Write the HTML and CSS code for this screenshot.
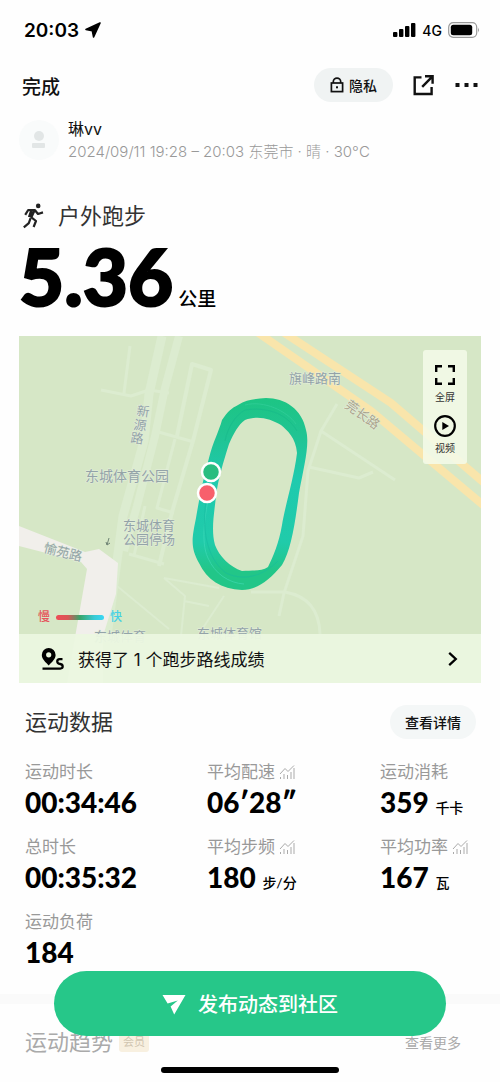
FILE: index.html
```html
<!DOCTYPE html>
<html lang="zh-CN">
<head>
    <meta charset="UTF-8">
    <meta name="viewport" content="width=device-width, initial-scale=1.0">
    <title>户外跑步</title>
    <link rel="stylesheet" href="styles.css">
</head>
<body>
    <div class="status-bar">
        <div class="status-left">
            <span class="clock">20:03</span>
            <svg width="16" height="16" viewBox="0 0 16 16"><path d="M15 1 L1 7.5 L7.3 8.7 L8.6 15 Z" fill="#000" stroke="#000" stroke-width="1.6" stroke-linejoin="round"/></svg>
        </div>
        <div class="status-right">
            <svg width="23" height="14" viewBox="0 0 23 14">
                <rect x="0" y="9" width="4.4" height="5" rx="1"/>
                <rect x="6" y="6" width="4.4" height="8" rx="1"/>
                <rect x="12" y="3" width="4.4" height="11" rx="1"/>
                <rect x="18" y="0" width="4.4" height="14" rx="1"/>
            </svg>
            <span class="network">4G</span>
            <svg width="32" height="16" viewBox="0 0 32 16">
                <rect x="0.7" y="0.7" width="28" height="14.6" rx="4.5" fill="#fff" stroke="#999" stroke-width="1.2"/>
                <rect x="2.8" y="2.8" width="21.4" height="10.4" rx="2.5"/>
                <path d="M30.2 5.5 Q32 8 30.2 10.5 Z" fill="#888"/>
            </svg>
        </div>
    </div>

    <header class="nav">
        <a href="#" class="nav-done">完成</a>
        <button class="pill privacy">
            <svg width="14" height="16" viewBox="0 0 14 16" fill="none" stroke="#111" stroke-width="1.7">
                <rect x="1.4" y="6" width="11.2" height="8.6"/>
                <path d="M3.3 6 V4.8 A3.7 3.7 0 0 1 10.7 4.8 V6"/>
                <rect x="6" y="9.3" width="2" height="2" fill="#111" stroke="none"/>
            </svg>
            隐私
        </button>
        <button class="icon-button" aria-label="分享">
            <svg width="22" height="22" viewBox="0 0 22 22" fill="none" stroke="#111" stroke-width="2.4">
                <path d="M8.5 3.4 H1.7 V20 H18.6 V13"/>
                <path d="M12 2.2 H19.6 V9.8 M19 2.8 L9.2 12.8"/>
            </svg>
        </button>
        <button class="icon-button" aria-label="更多">
            <svg width="24" height="4" viewBox="0 0 24 4"><path d="M0.5 0 h4 v4 h-4z M9.5 0 h4 v4 h-4z M18.5 0 h4 v4 h-4z" fill="#111"/></svg>
        </button>
    </header>

    <main>
        <section class="user">
            <svg class="avatar" width="40" height="40" viewBox="0 0 40 40">
                <circle cx="20" cy="20" r="20" fill="#f9fbfb"/>
                <circle cx="20" cy="16" r="5" fill="#e2e6e6"/>
                <rect x="13" y="23" width="13" height="5" rx="1" fill="#e2e6e6"/>
            </svg>
            <div>
                <div class="user-name">琳vv</div>
                <div class="user-meta">2024/09/11 19:28 – 20:03 东莞市 · 晴 · 30°C</div>
            </div>
        </section>

        <section class="summary">
            <h1>
                <svg width="22" height="26" viewBox="0 0 22 26" fill="none" stroke="#222" stroke-width="2.2" stroke-linejoin="round">
                    <circle cx="15.2" cy="2.9" r="2.3" fill="#222" stroke="none"/>
                    <path d="M2.2 11.8 L5.2 7 L12 7.2 L15 11 L20 9.4"/>
                    <path d="M11.6 7.4 L8.4 14.4 L13 18 L10.6 24"/>
                    <path d="M8.4 7.2 L6 14 M7.6 15.2 L5.8 20.2 L0.8 24.4"/>
                    <path d="M9 8 L7 14" stroke-width="3"/>
                </svg>
                户外跑步
            </h1>
            <p class="distance"><strong>5.36</strong><span>公里</span></p>
        </section>

        <section class="map">
            <svg class="map-canvas" viewBox="0 0 462 347" preserveAspectRatio="xMidYMid slice">
                <defs>
                    <linearGradient id="route" x1="0" y1="0" x2="0" y2="1">
                        <stop offset="0" stop-color="#1dc584"/>
                        <stop offset="0.2" stop-color="#20c493"/>
                        <stop offset="0.42" stop-color="#1fcaae"/>
                        <stop offset="0.75" stop-color="#20cbaa"/>
                        <stop offset="0.9" stop-color="#22c688"/>
                        <stop offset="1" stop-color="#22c688"/>
                    </linearGradient>
                    <linearGradient id="speed">
                        <stop offset="0" stop-color="#ee4d58"/>
                        <stop offset="0.25" stop-color="#d95656"/>
                        <stop offset="0.5" stop-color="#37a56b"/>
                        <stop offset="0.8" stop-color="#39cbd6"/>
                        <stop offset="1" stop-color="#3ad7f5"/>
                    </linearGradient>
                </defs>
                <rect width="462" height="347" fill="#d6e7c6"/>

                <!-- 小路 -->
                <g fill="none" stroke="#dcecd0" stroke-linejoin="round">
                    <path stroke-width="9" d="M143 0 L130 58 L125 105 L104 180 L88 300"/>
                    <path stroke-width="8" d="M160 0 L146 52 L136 100 L118 170 L105 215"/>
                    <path stroke-width="3" d="M111 10 L105 57 M82 54 L112 60 L130 54 L150 57"/>
                    <path stroke-width="4" d="M158 100 L173 28 L192 34 L174 105 L153 176 L140 230"/>
                    <path stroke-width="3" d="M136 95 L175 106 M156 103 L138 172 L155 177 M110 218 L145 228 M126 170 L115 220"/>
                    <path stroke-width="2" d="M98 250 L150 293 M145 242 L200 252 M145 242 L166 260 L162 300 M205 260 L180 298 M165 265 L190 270"/>
                    <path stroke-width="3" d="M318 68 L302 95 L289 135 L284 200 L265 257 L260 280 M302 95 L376 144 M290 131 L340 142 L354 136"/>
                    <path stroke-width="3" d="M232 256 H266 Q300 262 301 298"/>
                </g>

                <!-- 主路 -->
                <path d="M0 190 L66 216 L80 213 L99 227 L97 258 L84 300 V347 H48 L68 233 L62 226 L0 210 Z" fill="#f1efeb"/>
                <path d="M238 -4 L352 75 L470 174 M264 -4 L372 67 L470 151" stroke="#f9e5ab" stroke-width="8" fill="none"/>

                <!-- 跑步轨迹 -->
                <path d="M247 62 C266 62 283 73 287 94 C291 108 285 130 280 157 C276 188 272 214 263 229 C250 245 237 254 223 254 C202 253 188 244 180 227 C171 211 173 202 177 182 C180 164 184 143 190 122 C194 106 200 95 203 84 C209 75 213 72 219 69 C228 63 237 63 247 62 Z M226 84 C239 79 252 83 262 89 C268 94 277 102 278 117 C275 142 266 170 263 189 C260 207 254 221 249 231 C242 236 232 234 223 235 C211 231 200 220 196 209 C192 194 195 179 197 160 C199 144 204 127 210 108 C215 97 219 89 226 84 Z" fill="url(#route)" fill-rule="evenodd"/>
                <g fill="none" stroke-width="1" opacity="0.5">
                    <path stroke="#49dfc0" d="M193 145 C186 177 181 205 189 222 C196 238 210 247 225 248"/>
                    <path stroke="#16b78a" d="M206 105 C209 90 217 79 226 74 C246 71 267 76 278 95"/>
                    <path stroke="#16b99f" d="M188 160 C182 191 187 222 207 237 C228 247 247 237 259 225"/>
                    <path stroke="#3bd3a2" d="M226 69 C245 64 268 75 277 88"/>
                </g>
                <circle cx="192" cy="136" r="9" fill="#29bd80" stroke="#fff" stroke-width="2.5"/>
                <circle cx="188" cy="157" r="9" fill="#f8606c" stroke="#fff" stroke-width="2.5"/>

                <!-- 地名 -->
                <g class="map-label">
                    <text x="66" y="145" class="park">东城体育公园</text>
                    <text x="104" y="194">东城体育</text>
                    <text x="104" y="208">公园停场</text>
                    <text x="270" y="47">旗峰路南</text>
                    <text x="117" y="79" transform="rotate(8 117 79)">新</text>
                    <text x="114" y="93" transform="rotate(8 114 93)">源</text>
                    <text x="111" y="106" transform="rotate(8 111 106)">路</text>
                    <text x="24" y="216" transform="rotate(14 24 216)">愉苑路</text>
                    <text x="325" y="71" transform="rotate(36 325 71)" class="on-road">莞长路</text>
                    <text x="75" y="305">东城体育</text>
                    <text x="178" y="302">东城体育馆</text>
                </g>
                <path d="M90 202 L88 209 M87 206 L88 209 L91 207" stroke="#6f8474" fill="none"/>
                <text x="19" y="285" class="legend" fill="#e5545b">慢</text>
                <rect x="37" y="279" width="48" height="5" rx="2.5" fill="url(#speed)"/>
                <text x="91" y="285" class="legend" fill="#45d1e5">快</text>
            </svg>

            <div class="map-tools">
                <button>
                    <svg width="22" height="22" viewBox="0 0 22 22" fill="none" stroke="#000" stroke-width="2.4"><path d="M2.2 8 V2.2 H8 M14 2.2 H19.8 V8 M19.8 14 V19.8 H14 M8 19.8 H2.2 V14"/></svg>
                    全屏
                </button>
                <button>
                    <svg width="22" height="22" viewBox="0 0 22 22"><circle cx="11" cy="11" r="9.8" fill="none" stroke="#000" stroke-width="2.2"/><path d="M8.3 7 L15 11 L8.3 15 Z"/></svg>
                    视频
                </button>
            </div>

            <a href="#" class="route-result">
                <svg width="23" height="24" viewBox="0 0 23 24">
                    <path d="M7.7 1 A7 7 0 0 1 14.6 8 C14.6 12 10.6 15.5 7.7 18.4 C4.8 15.5 0.8 12 0.8 8 A7 7 0 0 1 7.7 1 Z M7.7 5.2 A2.6 2.6 0 1 0 7.7 10.4 A2.6 2.6 0 1 0 7.7 5.2 Z" fill-rule="evenodd"/>
                    <path d="M1.5 21.6 H19.2 C22.6 21.4 22.4 17.4 19.2 17 C15.3 16.6 15.5 12.2 18.5 12.2 H21.5" fill="none" stroke="#000" stroke-width="2.3"/>
                </svg>
                <span>获得了 1 个跑步路线成绩</span>
                <svg width="10" height="16" viewBox="0 0 10 16" fill="none" stroke="#000" stroke-width="2.3"><path d="M1.2 1.8 L7.8 8 L1.2 14.2"/></svg>
            </a>
        </section>

        <section class="data">
            <div class="section-head">
                <h2>运动数据</h2>
                <button class="pill">查看详情</button>
            </div>
            <dl class="stats">
                <div>
                    <dt>运动时长</dt>
                    <dd>00:34:46</dd>
                </div>
                <div>
                    <dt>平均配速 <svg class="trend-icon" viewBox="0 0 16 16"><path d="M1 10 L6 4.5 L9 7.5 L15 1.5 M1.5 15 V13 M5 15 V10 M8.5 15 V11 M12 15 V8 M15 15 V4"/></svg></dt>
                    <dd>06′28″</dd>
                </div>
                <div>
                    <dt>运动消耗</dt>
                    <dd>359 <small>千卡</small></dd>
                </div>
                <div>
                    <dt>总时长</dt>
                    <dd>00:35:32</dd>
                </div>
                <div>
                    <dt>平均步频 <svg class="trend-icon" viewBox="0 0 16 16"><path d="M1 10 L6 4.5 L9 7.5 L15 1.5 M1.5 15 V13 M5 15 V10 M8.5 15 V11 M12 15 V8 M15 15 V4"/></svg></dt>
                    <dd>180 <small>步/分</small></dd>
                </div>
                <div>
                    <dt>平均功率 <svg class="trend-icon" viewBox="0 0 16 16"><path d="M1 10 L6 4.5 L9 7.5 L15 1.5 M1.5 15 V13 M5 15 V10 M8.5 15 V11 M12 15 V8 M15 15 V4"/></svg></dt>
                    <dd>167 <small>瓦</small></dd>
                </div>
                <div>
                    <dt>运动负荷</dt>
                    <dd>184</dd>
                </div>
            </dl>
        </section>

        <section class="trend">
            <h2>运动趋势</h2>
            <span class="vip">会员</span>
            <a href="#">查看更多</a>
        </section>
    </main>

    <footer class="publish-bar">
        <button class="publish">
            <svg width="24" height="22" viewBox="0 0 24 22"><path d="M0.5 2 H23.5 L12.2 21.5 L8.6 13.4 L15.8 7.4 L5.6 10.6 Z" fill="#fff"/></svg>
            发布动态到社区
        </button>
        <div class="home-indicator"></div>
    </footer>
</body>
</html>
```
FILE: styles.css
```css
* {
    box-sizing: border-box;
}

body {
    margin: 0;
    background-color: #fefefe;
    color: #111;
    font-family: Inter, "Noto Sans CJK SC", sans-serif;
}

h1, h2, p, dl, dd {
    margin: 0;
    font-weight: 400;
}

svg {
    display: block;
    flex: none;
}

button {
    padding: 0;
    border: none;
    background: none;
    color: inherit;
    font-family: inherit;
    cursor: pointer;
}

a {
    color: inherit;
    text-decoration: none;
}

.status-bar {
    display: flex;
    justify-content: space-between;
    align-items: center;
    height: 60px;
    padding: 0 20px 0 24px;
}

.status-left, .status-right {
    display: flex;
    align-items: center;
    gap: 6px;
    color: #000;
}

.clock {
    font-size: 19px;
    font-weight: 600;
}

.network {
    font-size: 14px;
    font-weight: 500;
}

.nav {
    display: flex;
    align-items: center;
    height: 50px;
    padding: 0 21px 0 22px;
    gap: 20px;
}

.nav-done {
    margin-right: auto;
    font-size: 19px;
    font-weight: 500;
}

.pill {
    display: flex;
    align-items: center;
    justify-content: center;
    gap: 5px;
    height: 34px;
    padding: 0 15px;
    border-radius: 17px;
    background-color: #f4f7f7;
    font-size: 14px;
    font-weight: 500;
}

.privacy {
    padding: 0 16px;
    background-color: #f0f3f3;
}

main {
    padding: 0 19px;
}

.user {
    display: flex;
    align-items: center;
    gap: 9px;
    height: 60px;
}

.user-name {
    font-size: 16px;
    line-height: 24px;
}

.user-meta {
    color: #999;
    font-size: 15px;
    font-weight: 300;
    line-height: 22px;
}

.summary h1 {
    display: flex;
    align-items: center;
    gap: 13px;
    margin-top: 30px;
    padding-left: 4px;
    color: #333;
    font-size: 22px;
    line-height: 32px;
}

.distance {
    display: flex;
    align-items: baseline;
    gap: 5px;
    height: 104px;
    line-height: 88px;
    color: #000;
}

.distance strong {
    font-family: Lato, sans-serif;
    font-size: 78px;
    font-weight: 900;
    -webkit-text-stroke: 2px #000;
}

.distance span {
    font-size: 19px;
    font-weight: 500;
}

.map {
    position: relative;
    height: 347px;
    overflow: hidden;
}

.map-canvas {
    width: 100%;
    height: 100%;
}

.map-label {
    fill: #93a3a8;
    stroke: #e4eedc;
    stroke-width: 1px;
    paint-order: stroke;
    font-size: 13px;
}

.map-label .park {
    font-size: 14px;
}

.on-road {
    fill: #aba48c;
}

.legend {
    font-size: 12px;
    font-weight: 500;
}

.map-tools {
    position: absolute;
    top: 14px;
    right: 14px;
    display: flex;
    flex-direction: column;
    gap: 10px;
    width: 44px;
    padding: 14px 0 8px;
    border-radius: 3px;
    background-color: rgba(244, 250, 232, 0.88);
}

.map-tools button {
    display: flex;
    flex-direction: column;
    align-items: center;
    gap: 3px;
    color: #333;
    font-size: 10px;
    line-height: 16px;
}

.route-result {
    position: absolute;
    left: 0;
    right: 0;
    bottom: 0;
    display: flex;
    align-items: center;
    gap: 14px;
    height: 49px;
    padding: 0 23px 0 22px;
    background-color: rgba(235, 247, 224, 0.95);
    font-size: 17px;
}

.route-result span {
    flex: 1;
}

.section-head {
    display: flex;
    justify-content: space-between;
    align-items: center;
    margin-top: 22px;
    padding: 0 5px 0 6px;
}

.section-head h2, .trend h2 {
    font-size: 22px;
    line-height: 34px;
}

.section-head h2 {
    color: #333;
}

.stats {
    display: grid;
    grid-template-columns: 182fr 173fr 101fr;
    row-gap: 15px;
    margin-top: 21px;
    padding-left: 6px;
}

.stats dt {
    display: flex;
    align-items: center;
    gap: 4px;
    color: #999;
    font-size: 17px;
    line-height: 24px;
    white-space: nowrap;
}

.stats dd {
    height: 36px;
    color: #000;
    font-family: Lato, Inter, "Noto Sans CJK SC", sans-serif;
    font-size: 28px;
    font-weight: 900;
    line-height: 36px;
    white-space: nowrap;
}

.stats small {
    font-size: 14px;
    font-weight: 500;
}

.trend-icon {
    width: 16px;
    height: 16px;
    fill: none;
    stroke: #aaa;
    stroke-width: 1;
}

/* 底部区域被浮层盖住，所以偏淡 */
.trend {
    display: flex;
    align-items: center;
    gap: 6px;
    margin: 24px -19px 0;
    padding: 21px 39px 22px 25px;
    border-top: 10px solid #fafafa;
    color: #aaa;
}

.trend a {
    margin-left: auto;
    font-size: 14px;
}

.vip {
    padding: 0 4px;
    border-radius: 3px;
    background-color: #f8f0e0;
    color: #d0c5b0;
    font-size: 11px;
    line-height: 20px;
}

.publish-bar {
    position: fixed;
    left: 0;
    right: 0;
    bottom: 0;
    padding: 0 54px 9px;
}

.publish {
    display: flex;
    align-items: center;
    justify-content: center;
    gap: 12px;
    width: 100%;
    height: 65px;
    border-radius: 33px;
    background-color: #26c789;
    color: #fff;
    font-size: 20px;
    font-weight: 500;
}

.home-indicator {
    width: 178px;
    height: 6px;
    margin: 31px auto 0;
    border-radius: 3px;
    background-color: #000;
}
```
